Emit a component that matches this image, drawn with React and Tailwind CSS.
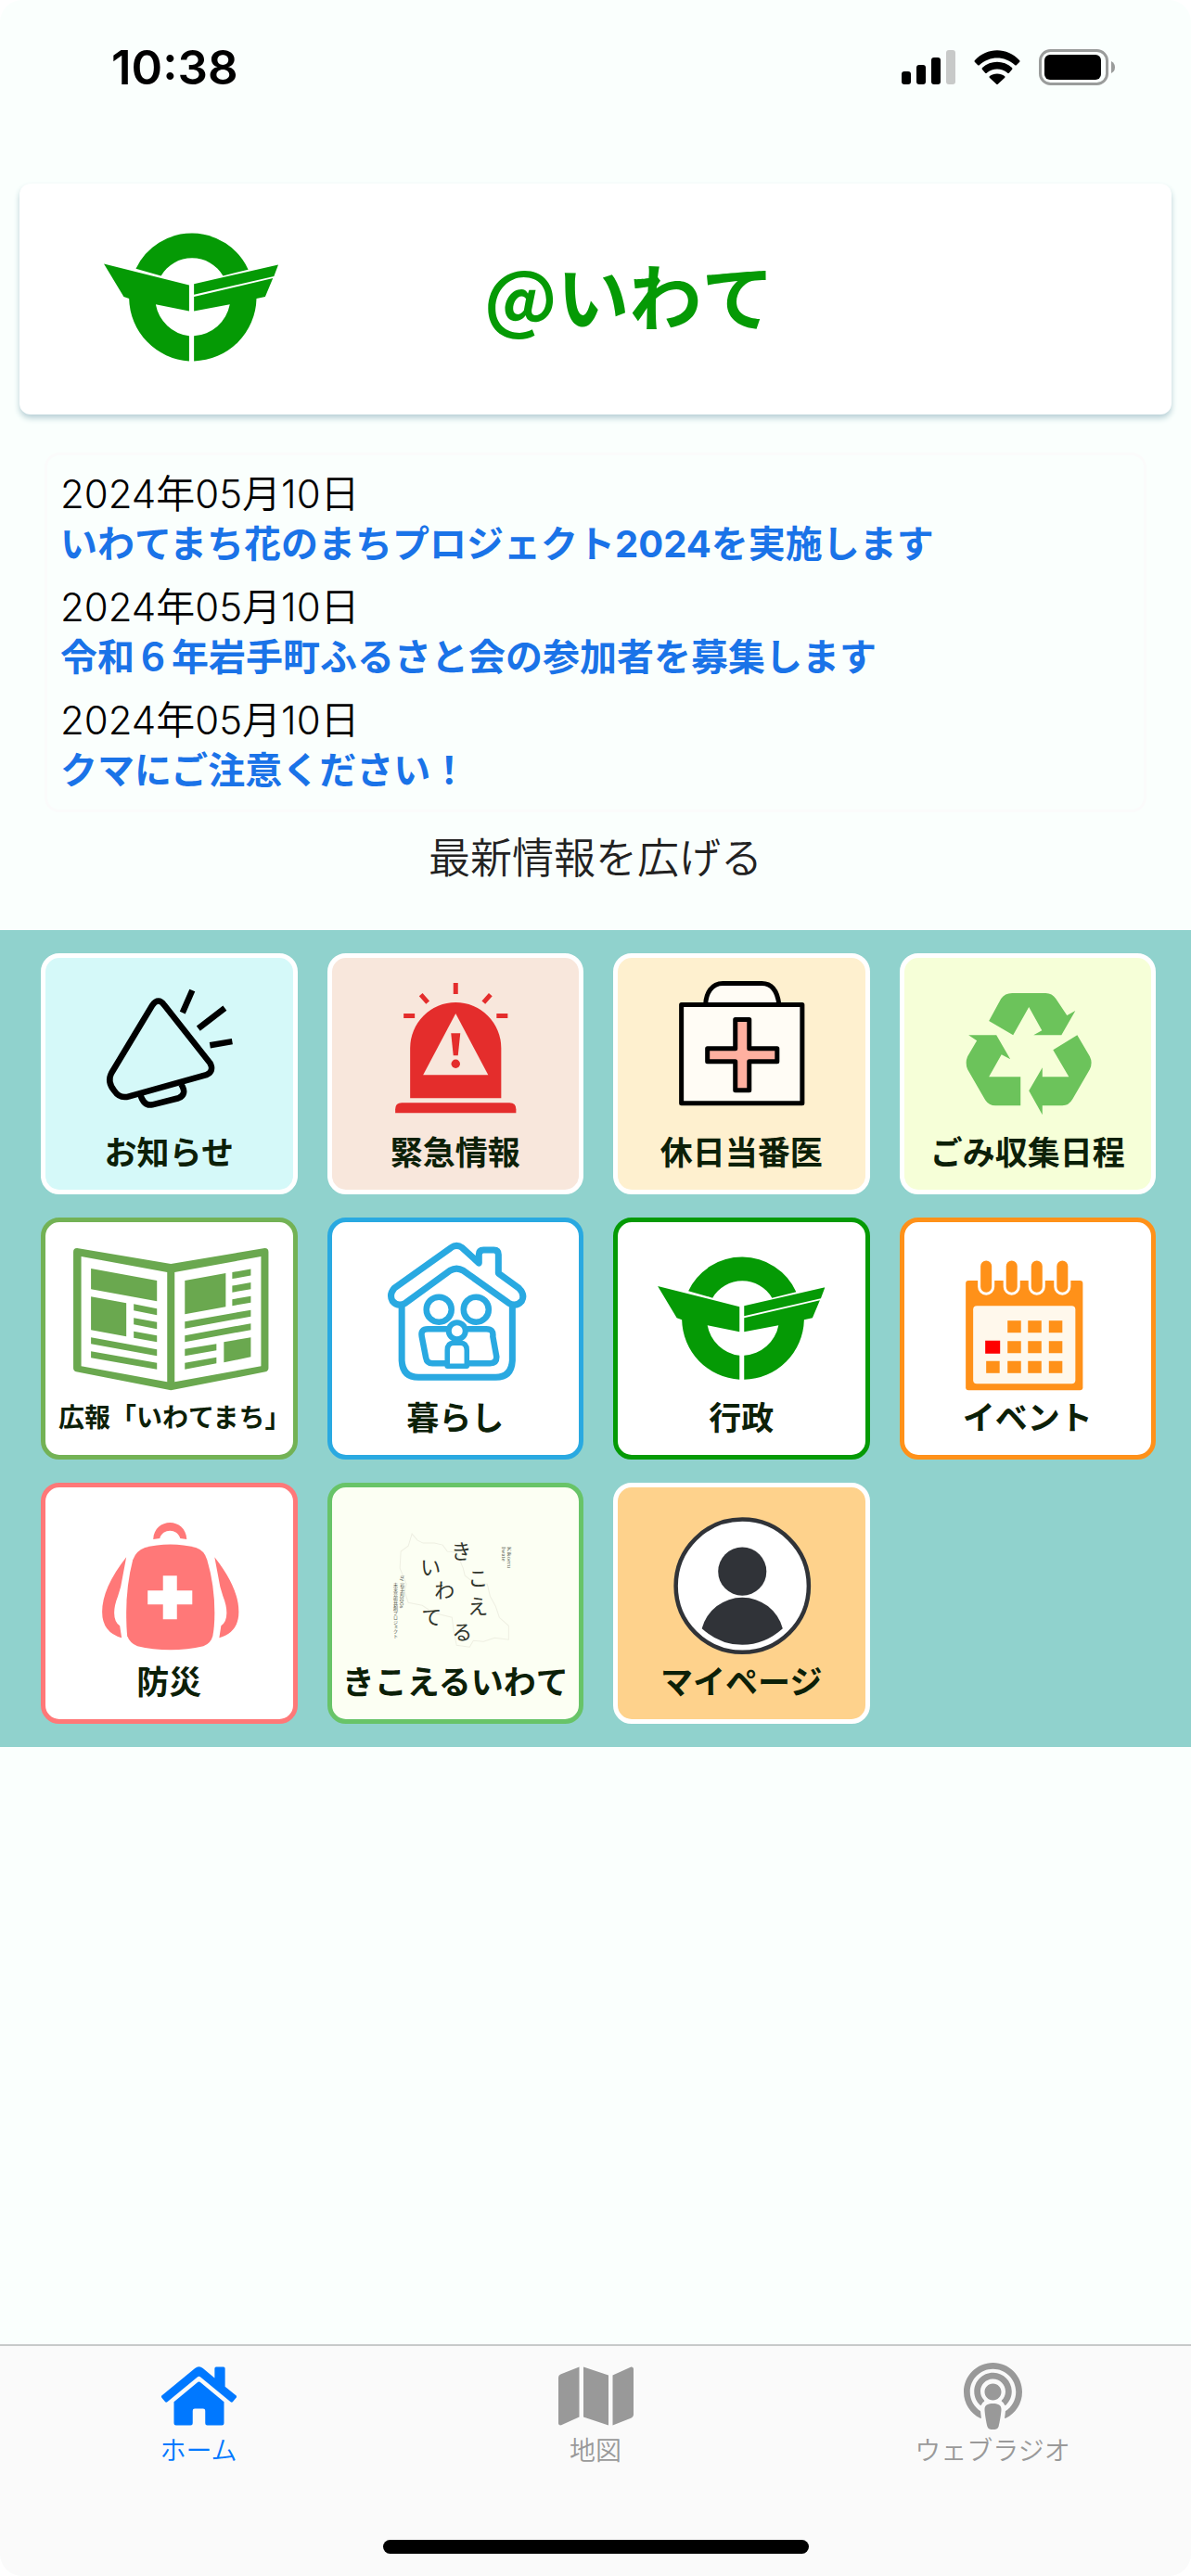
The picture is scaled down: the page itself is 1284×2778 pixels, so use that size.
import React, { useState } from "react";
import clsx from "clsx";
import { FaHome, FaMap, FaPodcast } from "react-icons/fa";

const news = [
  { date: "2024年05月10日", title: "いわてまち花のまちプロジェクト2024を実施します" },
  { date: "2024年05月10日", title: "令和６年岩手町ふるさと会の参加者を募集します" },
  { date: "2024年05月10日", title: "クマにご注意ください！" },
];

const Emblem = (props) => (
  <svg viewBox="0 0 180 133" fill="#059a05" aria-hidden="true" {...props}>
    <path d="M33 37A64 64 0 0 1 149 38L123 44.5A37 37 0 0 0 59 44.5Z" />
    <path d="M0 32L88 54V81L53.5 74A40 40 0 0 0 88 106.5V132.5A66 66 0 0 1 26 68L20.5 66Z" />
    <path d="M93 53L180 33L175.5 45L93 64Z" />
    <path d="M93 66L174.5 47L166.5 66L157.5 68A66 66 0 0 1 93 132.5V106.5A40 40 0 0 0 130 74L93 81Z" />
  </svg>
);

const MegaphoneArt = () => (
  <g fill="none" stroke="#000" strokeWidth="6.5">
    <path d="M115 51Q121.500 42 128 51L177 113Q182 122 173 126L90 149Q80 152 74 143Q66 133 71 124Z" />
    <path d="M102 147Q106 160 115 158L143 151Q153 147 146 136" />
    <path d="M158 35L147.500 59M193 54L164.500 76M201 90L177 94" />
  </g>
);

const SirenArt = () => (
  <g fill="#e42d2c">
    <path d="M84 151V97A49 49 0 0 1 182 97V151Z" />
    <path d="M68 167V163Q68 156 75 156H191Q198 156 198 163V167Z" />
    <path d="M133 60L168 126H98Z" fill="#f8e7dc" />
    <path d="M128 81H138L135.500 105H130.500Z" />
    <circle cx="133" cy="114" r="4.700" />
    <path
      d="M133 27V39M95.500 39.500L103 48M170.500 39.500L163 48M77 62.500H89M177 62.500H189"
      stroke="#e42d2c"
      strokeWidth="5"
    />
  </g>
);

const MedicalArt = () => (
  <g fill="#fffcf5" stroke="#000" strokeWidth="5" strokeLinejoin="round">
    <path d="M94.500 50C95 38 101 27.500 113 27.500H155C167 27.500 172 38 173.500 50" />
    <rect x="68.500" y="50.500" width="130" height="106" />
    <path
      d="M126.500 66.500H141.500V97.500H171.500V111.500H141.500V142.500H126.500V111.500H96.500V97.500H126.500Z"
      fill="#ffb0a0"
    />
  </g>
);

const RecycleArt = () => (
  <g fill="#6cc35b">
    <path d="M91 68L104 44Q108 38 116 38H152Q159 38 163 44L175 62L184 57L169 83H139L148 78L134 53L117 83Z" />
    <path d="M69 83H99L114 109L104.500 104L91 128H125V159H98Q91 159 87 153L68 120Q65 113 68 106L78 89Z" />
    <path d="M186 83L199.500 106Q203 113 199.500 120L181 152Q177 159 170 159H148.500V169L134 143L148.500 118V128H177L160 99Z" />
  </g>
);

const NewspaperArt = () => (
  <g fill="#6aa84f">
    <path
      fillRule="evenodd"
      d="M34 28L135 45L236 28Q240 28 240 32V157Q240 160 237 161L135 181L33 161Q30 160 30 157V32Q30 28 34 28ZM38.500 37V155L131 172V54ZM139 54V172L232 155V37Z"
    />
    <path d="M49 50L120 63V85L49 72ZM49 80L87 87V123L49 116Z" />
    <path d="M95 88L120 93V100L95 95ZM95 103L120 107.500V115L95 110ZM95 117.500L120 122V129L95 124.500Z" />
    <path d="M49 124L120 137V144L49 131ZM49 139L120 151.500V158.500L49 146Z" />
    <path d="M150 63L194 55V91L150 99ZM192 129L221 124V145L192 151Z" />
    <path d="M201 54L221 50.500V57.500L201 61ZM201 68.500L221 65V72L201 75.500ZM201 83L221 79.500V86.500L201 90Z" />
    <path d="M150 107L221 94.500V101.500L150 114.500ZM150 122L221 109V116L150 129Z" />
    <path d="M150 136.500L184 131V138L150 144ZM150 151.500L184 145.500V152L150 158.500Z" />
  </g>
);

const FamilyArt = () => (
  <g fill="none" stroke="#29a9e1" strokeWidth="7" strokeLinejoin="round">
    <path d="M128 27.500Q134 23 140 27.500L158 44V35Q158 30 163 30H174Q179 30 179 35V55L201 71Q208 78 204 85Q198 92 190 87L141 52Q134 48 127 52L79 87Q71 92 65 85Q61 78 67 71Z" />
    <path d="M75 90V149Q76 167 93 167H176Q193 167 194 149V90" />
    <g strokeWidth="6.500">
      <circle cx="115" cy="94" r="13.500" />
      <circle cx="155" cy="94" r="13.500" />
      <path d="M124 115H103Q95 115 96.500 123L101 146Q102 152 108 152H124" />
      <path d="M145 115H166Q174 115 173 123L177 145Q177 152 170 152H145" />
    </g>
    <circle cx="134.500" cy="117" r="9" strokeWidth="6" fill="#fff" />
    <path d="M124 155V138Q124 130 131 130H138Q145 130 145 138V155Z" strokeWidth="5.500" fill="#fff" />
  </g>
);

const GovernmentArt = () => <Emblem x="43" y="37" width="180" height="133" />;

const dayCells = [
  [111, 106], [133, 106], [155.5, 106],
  [111, 128], [133, 128], [155.5, 128],
  [88, 149.5], [111, 149.5], [133, 149.5], [155.5, 149.5],
];

const CalendarArt = () => (
  <g fill="#ff9119">
    <rect x="66" y="63" width="126" height="118" rx="3" />
    {[88, 115.5, 142.5, 170].map((x) => (
      <rect key={x} x={x - 7.5} y="40" width="15" height="37" rx="7.5" stroke="#fff" strokeWidth="3" />
    ))}
    <rect x="74" y="90" width="110" height="84" rx="4" fill="#fff8ec" />
    {dayCells.map(([x, y]) => (
      <rect key={`${x}-${y}`} x={x} y={y} width="14.500" height="13" />
    ))}
    <rect x="87" y="127.500" width="16" height="14" fill="#f00" />
  </g>
);

const strap = "M87 75Q61 108 61 134Q61 156 82 162L80 149Q74 145 74 135Q74 127 78 117L81 107Z";

const BackpackArt = () => (
  <g fill="#ff7878">
    <path d="M116 56C117 32 151 32 152 56L145 55C142 44 126 44 123 55Z" />
    <path d="M134.500 61.500Q149 61.500 162 65Q171 68 174 78Q182 105 182 135Q182 150 180 160Q178 168 170 171Q153 175 134.500 175Q115 175 99 171Q91 168 88 160Q87 150 87 135Q87 105 94 78Q98 68 107 65Q119 61.500 134.500 61.500Z" />
    <path d={strap} />
    <path d={strap} transform="translate(269 0) scale(-1 1)" />
    <path d="M126.500 95H141.500V111H158V126H141.500V142H126.500V126H110V111H126.500Z" fill="#fff" />
  </g>
);

const kanaMarks = [
  ["き", 139, 77], ["こ", 157, 106], ["え", 157, 136], ["る", 140, 164],
  ["い", 106, 94], ["わ", 121, 119], ["て", 107, 148],
];

const KikoeruArt = () => (
  <g fill="#30352c" textAnchor="middle">
    <path
      d="M86 50L92 57L98 60L110 60L119 62L124 69L134 70L141 87L143 95L148 99L155 104L167 104L170 117L176 128L180 140L190 149V164L175 162L163 166L152 165L148 172L134 170L131 155L129 140L109 135L97 127L82 124L78 112L80 104L73 87L74 69L82 63Z"
      fill="none"
      stroke="#eeefe2"
      strokeWidth="1"
    />
    {kanaMarks.map(([kana, x, y]) => (
      <text key={kana} x={x} y={y} fontSize="22">
        {kana}
      </text>
    ))}
    <g fontSize="6" textAnchor="start" fill="#555a50">
      <text transform="translate(189 64) rotate(90)" className="font-['Liberation_Serif',serif]" fontSize="7">Kikoeru</text>
      <text transform="translate(183 64) rotate(90)" className="font-['Liberation_Serif',serif]" fontSize="7">Iwate</text>
      <text transform="translate(74 95) rotate(90)" fontSize="5">by</text>
      <text x="75" y="102" fontSize="5" style={{ writingMode: "vertical-rl" }}>岩手町SDGs</text>
      <text x="68" y="102" fontSize="5" style={{ writingMode: "vertical-rl" }}>未来芸術共創プロジェクト</text>
    </g>
  </g>
);

const MyPageArt = () => (
  <g fill="#303338">
    <circle cx="134" cy="106" r="71.500" fill="#fff" stroke="#303338" strokeWidth="4.500" />
    <circle cx="134" cy="90.500" r="26" />
    <path d="M90.500 152A45 45 0 0 1 177.500 152Q158 169.500 134 169.500Q110 169.500 90.500 152Z" />
  </g>
);

const tiles = [
  { label: "お知らせ", art: MegaphoneArt, style: "border-white bg-[#d5f9f9]" },
  { label: "緊急情報", art: SirenArt, style: "border-white bg-[#f8e7dc]" },
  { label: "休日当番医", art: MedicalArt, style: "border-white bg-[#fef0cf]" },
  { label: "ごみ収集日程", art: RecycleArt, style: "border-white bg-[#f6ffd8]" },
  { label: "広報「いわてまち」", art: NewspaperArt, style: "border-[#73b255] bg-white", small: true },
  { label: "暮らし", art: FamilyArt, style: "border-[#29a9e1] bg-white" },
  { label: "行政", art: GovernmentArt, style: "border-[#059a05] bg-white" },
  { label: "イベント", art: CalendarArt, style: "border-[#ff9119] bg-white" },
  { label: "防災", art: BackpackArt, style: "border-[#ff7878] bg-white" },
  { label: "きこえるいわて", art: KikoeruArt, style: "border-[#68c468] bg-[#fcfff3]" },
  { label: "マイページ", art: MyPageArt, style: "border-white bg-[#fed28c]" },
];

const tabs = [
  { id: "home", label: "ホーム", icon: FaHome, size: "w-[81px]" },
  { id: "map", label: "地図", icon: FaMap, size: "w-[81px]" },
  { id: "radio", label: "ウェブラジオ", icon: FaPodcast, size: "w-[63px]" },
];

const StatusBar = () => (
  <div className="flex h-[198px] items-start justify-between pt-10 pr-[82px] pl-[120px]">
    <span className="font-[Inter] text-[51px] leading-[66px] font-semibold">10:38</span>
    <div className="flex h-16 items-center gap-5">
      <svg className="h-[37px] w-[58px]" viewBox="0 0 58 37" aria-hidden="true">
        <rect x="0" y="23" width="10" height="14" rx="3" />
        <rect x="16" y="16" width="10" height="21" rx="3" />
        <rect x="32" y="8" width="10" height="29" rx="3" />
        <rect x="48" y="0" width="10" height="37" rx="3" fill="#c8cac9" />
      </svg>
      <svg className="h-[37px] w-[50px]" viewBox="0 0 50 37" aria-hidden="true">
        <path d="M1 11C14 -3.500 36 -3.500 49 11Q50 12 49 13L46 16Q45 17 44 16C33 6 17 6 6 16Q5 17 4 16L1 13Q0 12 1 11Z" />
        <path d="M9 19C18 10.500 32 10.500 41 19Q42 20 41 21L38 24.500Q37 25.500 36 24.500C30 19 20 19 14 24.500Q13 25.500 12 24.500L9 21Q8 20 9 19Z" />
        <path d="M17 28C21 24.500 29 24.500 33 28Q34 29 33 30L26 36.500Q25 37.500 24 36.500L17 30Q16 29 17 28Z" />
      </svg>
      <svg className="h-[39px] w-[82px]" viewBox="0 0 82 39" aria-hidden="true">
        <rect x="1.500" y="1.500" width="72" height="36" rx="11" fill="none" stroke="#9a9c9b" strokeWidth="3" />
        <rect x="6" y="6" width="61" height="27" rx="6" />
        <path d="M78 13Q82 15 82 19.500Q82 24 78 26Z" fill="#9a9c9b" />
      </svg>
    </div>
  </div>
);

const Tile = ({ label, art: Art, style, small }) => (
  <button type="button" className={clsx("flex flex-col items-center rounded-[20px] border-[5px] pb-5", style)}>
    <svg className="w-full" viewBox="0 0 266 190" aria-hidden="true">
      <Art />
    </svg>
    <span
      className={clsx(
        "leading-10 font-bold whitespace-nowrap text-[#0c2008]",
        small ? "pl-3 text-[28px]" : "text-[35px]"
      )}
    >
      {label}
    </span>
  </button>
);

const App = () => {
  const [activeTab, setActiveTab] = useState("home");

  return (
    <div className="bg-white font-[Inter,'Noto_Sans_CJK_JP',sans-serif] text-black" lang="ja">
      <div className="flex min-h-screen flex-col overflow-hidden rounded-3xl bg-[#fafffd]">
        <StatusBar />

        <header className="mx-[21px] flex h-[249px] items-center gap-[222px] rounded-xl bg-white pb-1 pl-[91px] shadow-[0_4px_6px_#b8d0d6]">
          <Emblem className="w-[188px]" />
          <h1 className="pb-2 font-['Noto_Sans_CJK_JP',sans-serif] text-[78px] leading-none font-bold text-[#059a05]">
            @いわて
          </h1>
        </header>

        <main>
          <ul className="mx-12 mt-[41px] flex flex-col gap-[14px] rounded-2xl border-[3px] border-[#fbfbfb] px-[14px] py-[15px] leading-[54px]">
            {news.map((item) => (
              <li key={item.title}>
                <p className="text-[42px] font-[350]">{item.date}</p>
                <a href="#" className="block text-[40px] font-bold text-[#1a73e8]">
                  {item.title}
                </a>
              </li>
            ))}
          </ul>

          <button type="button" className="block h-[127px] w-full pb-7 text-[45px] font-[350] text-[#222]">
            最新情報を広げる
          </button>

          <section className="grid grid-cols-4 gap-x-8 gap-y-[25px] bg-[#90d2cd] py-[25px] pr-[38px] pl-11">
            {tiles.map((tile) => (
              <Tile key={tile.label} {...tile} />
            ))}
          </section>
        </main>

        <footer className="mt-auto border-t-2 border-[#c8caca] bg-[#fafafa] pt-[18px] pb-6">
          <nav className="grid grid-cols-3">
            {tabs.map(({ id, label, icon: Icon, size }) => (
              <button
                key={id}
                type="button"
                onClick={() => setActiveTab(id)}
                className={clsx(
                  "flex flex-col items-center gap-[7px]",
                  activeTab === id ? "text-[#0078ff]" : "text-[#999]"
                )}
              >
                <Icon className={clsx("h-[72px]", size)} />
                <span className="text-[28px] leading-8 font-[350]">{label}</span>
              </button>
            ))}
          </nav>
          <div className="mx-auto mt-20 h-[15px] w-[459px] rounded-full bg-black" />
        </footer>
      </div>
    </div>
  );
};

export default App;
